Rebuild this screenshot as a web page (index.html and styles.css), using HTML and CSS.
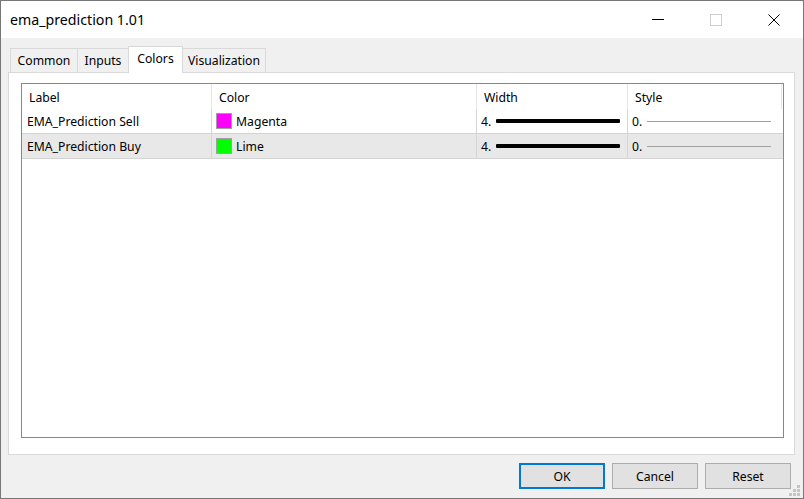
FILE: index.html
```html
<!DOCTYPE html>
<html lang="en">
<head>
  <meta charset="UTF-8" />
  <title>ema_prediction 1.01</title>
  <link rel="stylesheet" href="styles.css">
</head>
<body>

  <div class="window">
    <div class="titlebar">
      <div class="title">ema_prediction 1.01</div>
      <div class="caption-btn">
        <svg width="12" height="12" viewBox="0 0 12 12"><path d="M0 5.5H12" stroke="#000" stroke-width="1"/></svg>
      </div>
      <div class="caption-btn">
        <svg width="12" height="12" viewBox="0 0 12 12"><rect x="0.5" y="0.5" width="11" height="11" fill="none" stroke="#ccc" stroke-width="1"/></svg>
      </div>
      <div class="caption-btn close">
        <svg width="12" height="12" viewBox="0 0 12 12"><path d="M0.5 0.5L11.5 11.5M11.5 0.5L0.5 11.5" stroke="#000" stroke-width="1"/></svg>
      </div>
    </div>

    <div class="client">
      <div class="tabs">
        <div class="tab tab-common">Common</div>
        <div class="tab tab-inputs">Inputs</div>
        <div class="tab tab-colors active">Colors</div>
        <div class="tab tab-vis">Visualization</div>
      </div>

      <div class="panel">
        <div class="list">
          <div class="row head">
            <div class="cell c-label">Label</div>
            <div class="cell c-color">Color</div>
            <div class="cell c-width">Width</div>
            <div class="cell c-style">Style</div>
          </div>

          <div class="row">
            <div class="cell c-label">EMA_Prediction Sell</div>
            <div class="cell c-color"><span class="swatch magenta"></span>Magenta</div>
            <div class="cell c-width">4.<span class="thick"></span></div>
            <div class="cell c-style">0.<span class="thin"></span></div>
          </div>

          <div class="row alt">
            <div class="cell c-label">EMA_Prediction Buy</div>
            <div class="cell c-color"><span class="swatch lime"></span>Lime</div>
            <div class="cell c-width">4.<span class="thick"></span></div>
            <div class="cell c-style">0.<span class="thin"></span></div>
          </div>
        </div>
      </div>

      <div class="buttons">
        <div class="btn default">OK</div>
        <div class="btn">Cancel</div>
        <div class="btn">Reset</div>
      </div>
    </div>

    <svg class="grip" width="12" height="12" viewBox="0 0 12 12">
      <rect x="8" y="0" width="3" height="3" fill="#c4c4c4"/>
      <rect x="4" y="4" width="3" height="3" fill="#c4c4c4"/>
      <rect x="8" y="4" width="3" height="3" fill="#c4c4c4"/>
      <rect x="0" y="8" width="3" height="3" fill="#c4c4c4"/>
      <rect x="4" y="8" width="3" height="3" fill="#c4c4c4"/>
      <rect x="8" y="8" width="3" height="3" fill="#c4c4c4"/>
    </svg>
  </div>

</body>
</html>
```

FILE: styles.css
```css
body {
  margin: 0;
  background: #fff;
  font-family: 'Noto Sans', sans-serif;
  font-size: 12.2px;
  color: #000;
}

.window {
  position: relative;
  width: 804px;
  height: 499px;
  box-sizing: border-box;
  border: 1px solid #777;
  display: flex;
  flex-direction: column;
  background: #f0f0f0;
}

/* title bar */
.titlebar {
  height: 37px;
  background: #fff;
  display: flex;
  align-items: center;
  flex-shrink: 0;
}

.title {
  flex: 1;
  padding-left: 9px;
  font-size: 14.2px;
  line-height: 37px;
}

.caption-btn {
  width: 58px;
  height: 37px;
  display: flex;
  align-items: center;
  justify-content: center;
}

.caption-btn svg {
  display: block;
}

/* client area */
.client {
  flex: 1;
  display: flex;
  flex-direction: column;
  padding: 0 8px 9px 7px;
}

.tabs {
  display: flex;
  align-items: flex-end;
  padding: 8px 0 0 2px;
  height: 26px;
}

.tab {
  box-sizing: border-box;
  height: 24px;
  border: 1px solid #d9d9d9;
  border-bottom: none;
  margin-left: -1px;
  display: flex;
  align-items: center;
  justify-content: center;
  background: #f0f0f0;
}

.tab-common { width: 68px; margin-left: 0; }
.tab-inputs { width: 52px; }
.tab-colors { width: 55px; }
.tab-vis { width: 84px; }

.tab.active {
  height: 27px;
  background: #fff;
  position: relative;
  z-index: 1;
  margin-bottom: -1px;
  padding-bottom: 3px;
}

.panel {
  flex: 1;
  background: #fff;
  border: 1px solid #d9d9d9;
  display: flex;
  flex-direction: column;
  padding: 10px 10px 16px 12px;
}

.list {
  flex: 1;
  border: 1px solid #828790;
  background: #fff;
}

.row {
  display: flex;
  height: 25px;
  box-sizing: border-box;
  border-bottom: 1px solid #d4d4d4;
}

.row.head {
  border-bottom: none;
}

.row.alt {
  background: #e8e8e8;
}

.cell {
  box-sizing: border-box;
  display: flex;
  align-items: center;
  padding-left: 5px;
  border-right: 1px solid #d4d4d4;
  white-space: nowrap;
}

.head .cell {
  border-right-color: #e5e5e5;
  padding-left: 7px;
  padding-top: 2px;
}

.c-label { width: 190px; }
.c-color { width: 265px; padding-left: 4px; }
.c-width { width: 151px; padding-left: 4px; }
.c-style { width: 154px; padding-left: 4px; }

.row:not(.head) .c-style {
  border-right: none;
}

.swatch {
  width: 14px;
  height: 14px;
  border: 1px solid #a0a0a0;
  margin-right: 4px;
}

.magenta { background: #ff00ff; }
.lime { background: #00ff00; }

.thick {
  width: 124px;
  height: 4px;
  background: #000;
  border-radius: 1px;
  margin-left: 5px;
}

.thin {
  width: 124px;
  height: 1px;
  background: #a0a0a0;
  margin-left: 5px;
}

/* buttons */
.buttons {
  display: flex;
  justify-content: flex-end;
  gap: 7px;
  margin-top: 8px;
  padding-right: 4px;
}

.btn {
  width: 86px;
  height: 26px;
  box-sizing: border-box;
  border: 1px solid #adadad;
  background: #e1e1e1;
  display: flex;
  align-items: center;
  justify-content: center;
}

.btn.default {
  border: 2px solid #0078d7;
}

.grip {
  position: absolute;
  right: 2px;
  bottom: 1px;
}
```
